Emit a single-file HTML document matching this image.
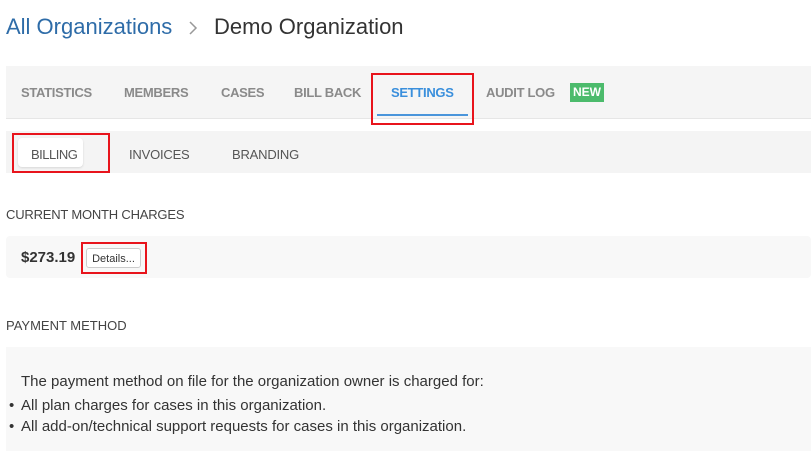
<!DOCTYPE html>
<html><head><style>
body{margin:0;width:811px;height:451px;background:#fff;font-family:"Liberation Sans",sans-serif;position:relative;overflow:hidden}
.a{position:absolute;white-space:nowrap}
.tab{position:absolute;top:85px;font-size:13px;font-weight:bold;color:#8a8a8a;letter-spacing:-0.3px}
.sub{position:absolute;top:147px;font-size:13px;color:#555;letter-spacing:-0.2px}
.red{position:absolute;border:2px solid #e8141c;box-sizing:border-box}
.t{position:absolute;font-size:15px;color:#333;white-space:nowrap}
</style></head><body>
<div class="a" style="left:6px;top:14px;font-size:22px;color:#2e6ca8">All Organizations</div>
<svg class="a" style="left:188px;top:20px" width="10" height="16"><path d="M2 2 L8 8 L2 14" fill="none" stroke="#999" stroke-width="1.5"/></svg>
<div class="a" style="left:214px;top:14px;font-size:22px;color:#333">Demo Organization</div>

<div class="a" style="left:6px;top:66px;width:805px;height:52px;background:#f5f5f5;border-bottom:1px solid #e6e6e6"></div>
<div class="tab" style="left:21px">STATISTICS</div>
<div class="tab" style="left:124px">MEMBERS</div>
<div class="tab" style="left:221px">CASES</div>
<div class="tab" style="left:294px">BILL BACK</div>
<div class="tab" style="left:391px;color:#3a8fdc">SETTINGS</div>
<div class="a" style="left:377px;top:114px;width:91px;height:2px;background:#4a95db"></div>
<div class="tab" style="left:486px">AUDIT LOG</div>
<div class="a" style="left:570px;top:83px;width:34px;height:19px;background:#4cbb6c;color:#fff;font-size:12px;font-weight:bold;text-align:center;line-height:19px">NEW</div>
<div class="red" style="left:371px;top:73px;width:103px;height:52px"></div>

<div class="a" style="left:6px;top:131px;width:805px;height:42px;background:#f4f4f4"></div>
<div class="a" style="left:18px;top:138px;width:65px;height:29px;background:#fff;border-radius:4px;box-shadow:0 1px 2px rgba(0,0,0,.12)"></div>
<div class="sub" style="left:31px;letter-spacing:-0.5px">BILLING</div>
<div class="sub" style="left:129px">INVOICES</div>
<div class="sub" style="left:232px">BRANDING</div>
<div class="red" style="left:12px;top:133px;width:98px;height:40px"></div>

<div class="a" style="left:6px;top:207px;font-size:13px;color:#444;letter-spacing:-0.2px">CURRENT MONTH CHARGES</div>
<div class="a" style="left:6px;top:236px;width:805px;height:42px;background:#f8f8f8;border-radius:4px"></div>
<div class="a" style="left:21px;top:249px;font-size:15px;font-weight:bold;color:#333">$273.19</div>
<div class="a" style="left:86px;top:248px;width:55px;height:20px;border:1px solid #ccc;border-radius:3px;background:#fff;font-size:11px;color:#333;text-align:center;line-height:20px;box-sizing:border-box">Details...</div>
<div class="red" style="left:81px;top:242px;width:66px;height:32px"></div>

<div class="a" style="left:6px;top:318px;font-size:13px;color:#444">PAYMENT METHOD</div>
<div class="a" style="left:6px;top:347px;width:805px;height:104px;background:#f8f8f8"></div>
<div class="t" style="left:21px;top:373px">The payment method on file for the organization owner is charged for:</div>
<div class="t" style="left:9px;top:397px">•</div>
<div class="t" style="left:21px;top:397px">All plan charges for cases in this organization.</div>
<div class="t" style="left:9px;top:418px">•</div>
<div class="t" style="left:21px;top:418px">All add-on/technical support requests for cases in this organization.</div>
</body></html>
